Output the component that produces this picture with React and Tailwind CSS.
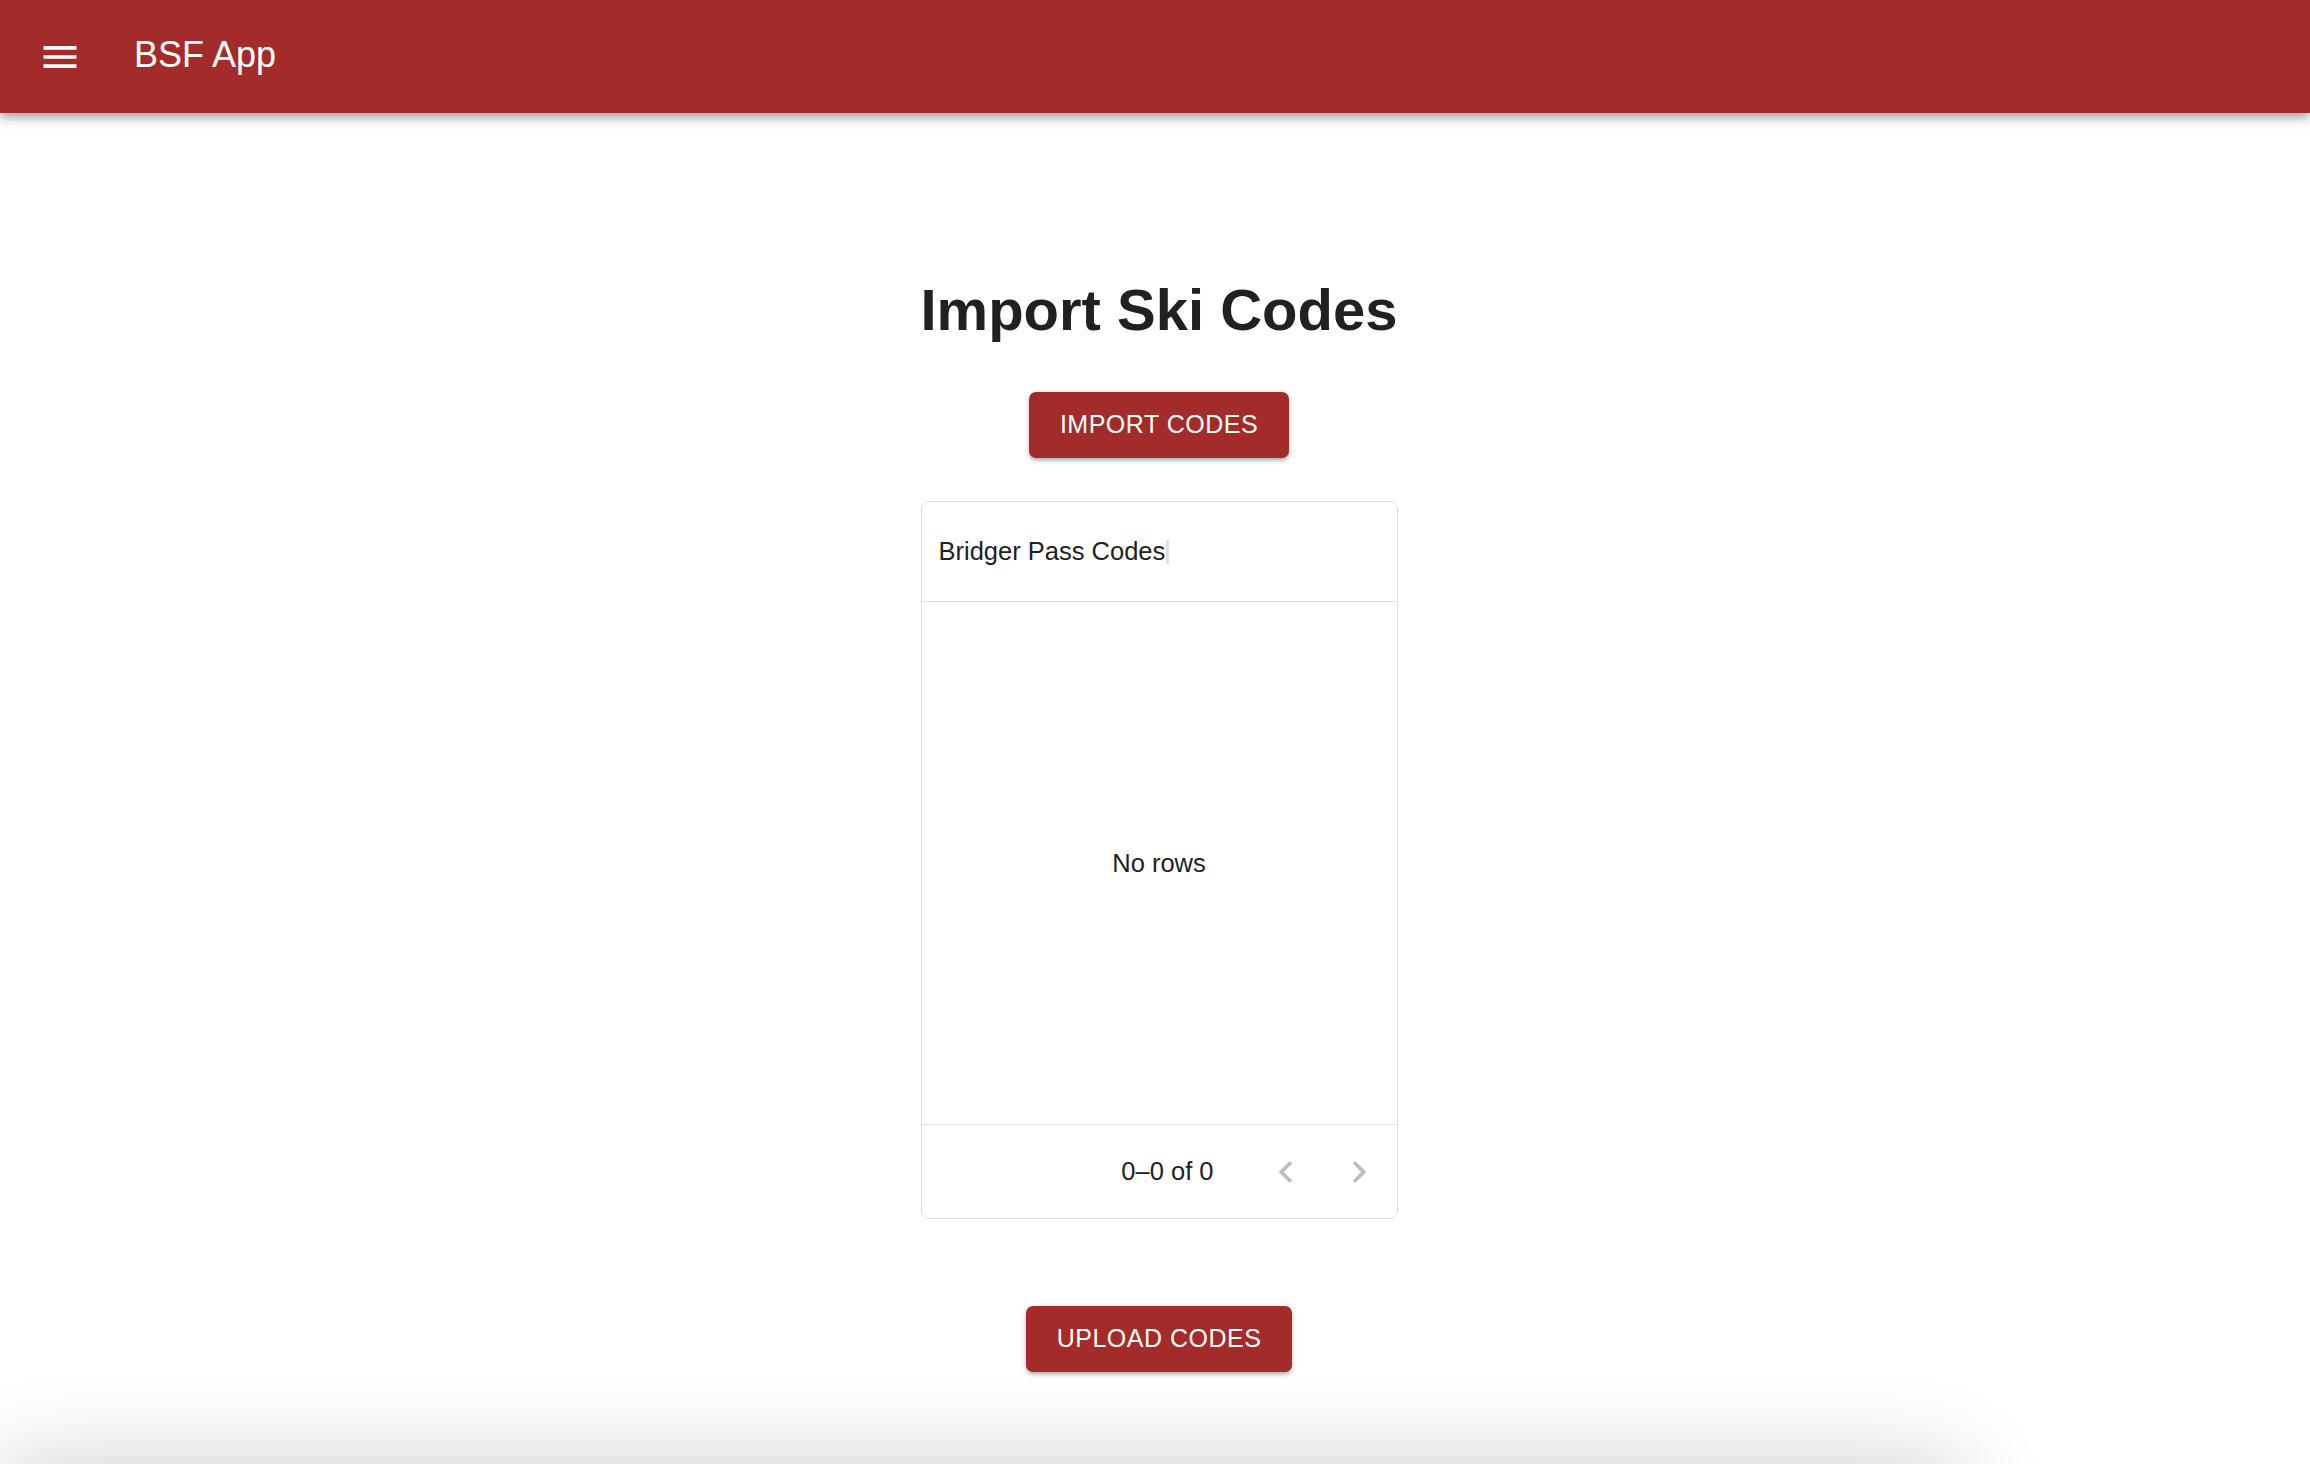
import React from 'react';

function MenuIcon() {
    return (
        <svg viewBox="0 0 24 24" className="w-[44px] h-[44px]" fill="currentColor">
            <path d="M3 18h18v-2H3zm0-5h18v-2H3zm0-7v2h18V6z" />
        </svg>
    );
}

function ChevronLeft() {
    return (
        <svg viewBox="0 0 24 24" className="w-[44px] h-[44px]" fill="currentColor">
            <path d="M15.41 7.41 14 6l-6 6 6 6 1.41-1.41L10.83 12z" />
        </svg>
    );
}

function ChevronRight() {
    return (
        <svg viewBox="0 0 24 24" className="w-[44px] h-[44px]" fill="currentColor">
            <path d="M10 6 8.59 7.41 13.17 12l-4.58 4.59L10 18l6-6z" />
        </svg>
    );
}

const btn =
    'flex items-center justify-center h-[66px] rounded-[7px] bg-[#a32b29] text-white text-[25px] tracking-[0.5px] uppercase shadow-[0_3px_4px_-1px_rgba(0,0,0,0.25),0_2px_6px_rgba(0,0,0,0.14)]';

export default function App() {
    return (
        <div className="relative h-screen overflow-hidden bg-white text-[#212121] font-['Liberation_Sans',Arial,sans-serif]">
            {/* App bar */}
            <header className="relative z-10 h-[113px] bg-[#a32b29] text-white flex items-center pl-[38px] shadow-[0_4px_7px_-2px_rgba(0,0,0,0.2),0_7px_9px_0_rgba(0,0,0,0.14),0_2px_18px_0_rgba(0,0,0,0.12)]">
                <MenuIcon />
                <span className="ml-[52px] mb-[3px] text-[36px] leading-none">BSF App</span>
            </header>

            {/* Main */}
            <main className="flex flex-col items-center pt-[168px] pl-2">
                <h1 className="text-[58px] leading-none font-bold">Import Ski Codes</h1>

                <button className={`${btn} mt-[53px] w-[260px]`}>Import Codes</button>

                <div className="mt-[43px] w-[477px] border border-[#e0e0e0] rounded-[7px] text-[25.5px]">
                    <div className="h-[100px] border-b border-[#e0e0e0] flex items-center pl-[17px]">
                        <span className="leading-none">Bridger Pass Codes</span>
                        <span className="ml-[1px] w-[3px] h-[24px] bg-[#e0e0e0]"></span>
                    </div>
                    <div className="h-[522px] flex items-center justify-center pt-[2px]">
                        <span className="leading-none">No rows</span>
                    </div>
                    <div className="h-[94px] border-t border-[#e0e0e0] flex items-center justify-end pr-[16px]">
                        <span className="leading-none mr-[50px]">0–0 of 0</span>
                        <span className="text-[#bdbdbd] flex gap-[29px]">
                            <ChevronLeft />
                            <ChevronRight />
                        </span>
                    </div>
                </div>

                <button className={`${btn} mt-[87px] w-[266px]`}>Upload Codes</button>
            </main>

            {/* shadow of sheet below the fold */}
            <div className="absolute left-0 top-full w-[1960px] h-[200px] bg-white shadow-[0_0_90px_rgba(0,0,0,0.2)]"></div>
        </div>
    );
}
